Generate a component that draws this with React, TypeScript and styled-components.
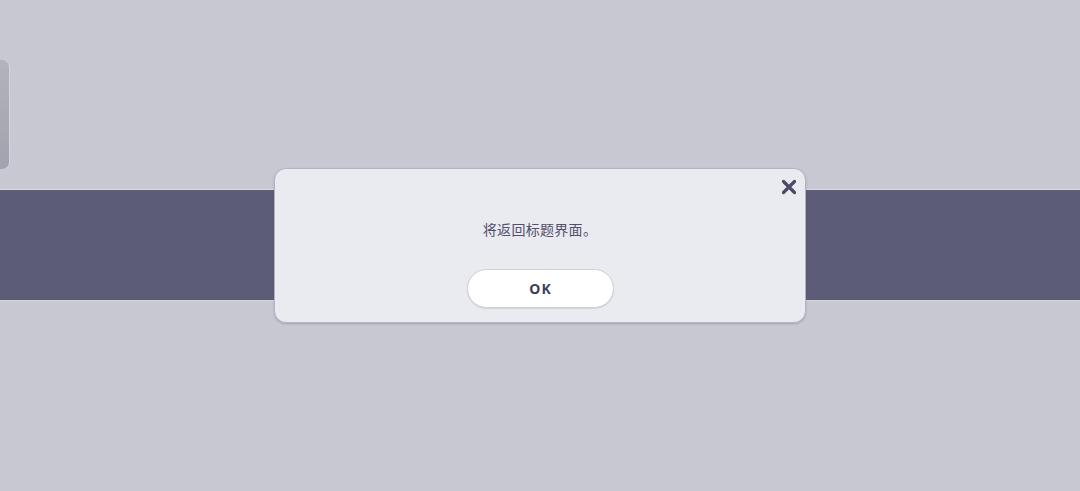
import React from "react";
import styled, { createGlobalStyle } from "styled-components";

const Global = createGlobalStyle`
  html, body { margin: 0; padding: 0; }
  body {
    background: #c8c8d2;
    font-family: "Noto Sans", "Noto Sans CJK SC", sans-serif;
    width: 1080px;
    height: 491px;
    overflow: hidden;
  }
`;

const Screen = styled.div`
  position: relative;
  width: 1080px;
  height: 491px;
  display: flex;
  flex-direction: column;
  background: #c8c8d2;
`;

const SideTab = styled.div`
  margin-top: 60px;
  width: 9px;
  height: 109px;
  border-radius: 0 7px 7px 0;
  background: linear-gradient(180deg, #b3b3bd 0%, #a2a2ae 100%);
  box-shadow: 1px 0 0 rgba(255, 255, 255, 0.25);
`;

const Band = styled.div`
  margin-top: 20px;
  height: 110px;
  background: #5d5c78;
  border-top: 1px solid #dadae2;
  border-bottom: 1px solid #d4d4dc;
`;

const Dialog = styled.div`
  position: absolute;
  left: 274px;
  top: 168px;
  width: 532px;
  height: 155px;
  box-sizing: border-box;
  background: #eaeaf1;
  border: 1px solid #b4b4c0;
  border-radius: 12px;
  box-shadow: 0 1px 2px rgba(60, 60, 90, 0.25);
  display: flex;
  flex-direction: column;
  align-items: center;
`;

const Message = styled.div`
  margin-top: 50px;
  font-size: 14px;
  line-height: 20px;
  color: #51516a;
  letter-spacing: 0.3px;
  font-family: "Noto Sans CJK SC", sans-serif;
`;

const OkButton = styled.button`
  margin-top: 30px;
  width: 147px;
  height: 39px;
  box-sizing: border-box;
  background: #ffffff;
  border: 1px solid #cfcfd8;
  border-radius: 20px;
  box-shadow: 0 1px 1px rgba(80, 80, 110, 0.15);
  font-family: "Noto Sans", sans-serif;
  font-weight: 700;
  font-size: 14px;
  letter-spacing: 1px;
  color: #3f3f55;
  padding: 0 0 0 1px;
  cursor: pointer;
`;

const CloseButton = styled.button`
  position: absolute;
  right: 7px;
  top: 9px;
  width: 18px;
  height: 18px;
  padding: 0;
  border: none;
  background: transparent;
  display: flex;
  align-items: center;
  justify-content: center;
  cursor: pointer;
`;

export default function App() {
  return (
    <>
      <Global />
      <Screen>
        <SideTab />
        <Band />
        <Dialog>
          <CloseButton aria-label="close">
            <svg width="16" height="16" viewBox="0 0 16 16">
              <path
                d="M2.5 2.5 L13.5 13.5 M13.5 2.5 L2.5 13.5"
                stroke="#4a4a64"
                strokeWidth="3.2"
                strokeLinecap="round"
              />
            </svg>
          </CloseButton>
          <Message>将返回标题界面。</Message>
          <OkButton>OK</OkButton>
        </Dialog>
      </Screen>
    </>
  );
}
